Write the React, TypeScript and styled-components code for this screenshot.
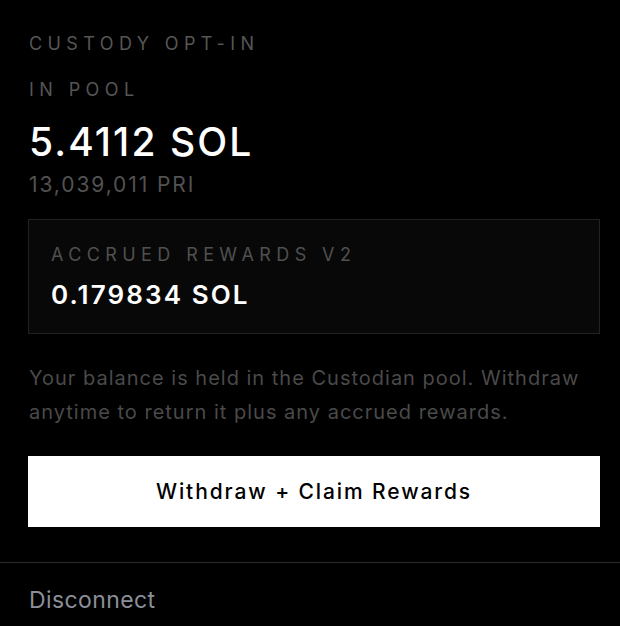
import styled, { createGlobalStyle } from 'styled-components';

const GlobalStyle = createGlobalStyle`
  html, body {
    margin: 0;
    background: #000;
  }
  body {
    font-family: Inter, 'Noto Sans', sans-serif;
    -webkit-font-smoothing: antialiased;
  }
`;

const Panel = styled.main`
  display: flex;
  flex-direction: column;
  min-height: 626px;
  background: #000;
  padding-top: 32px;
  box-sizing: border-box;
`;

const Section = styled.section`
  display: flex;
  flex-direction: column;
  padding: 0 20px 0 28px;
`;

const Label = styled.div<{ $gap?: number }>`
  font-size: 18px;
  line-height: 24px;
  letter-spacing: 0.3em;
  text-transform: uppercase;
  color: #565656;
  padding-left: 1px;
  margin-bottom: ${(p) => p.$gap ?? 0}px;
`;

const Amount = styled.div`
  margin-top: 18px;
  font-size: 39px;
  line-height: 44px;
  font-weight: 500;
  color: #fff;
  letter-spacing: 2.1px;
  padding-left: 1px;
`;

const SubAmount = styled.div`
  margin-top: 8px;
  font-size: 21px;
  line-height: 26px;
  color: #525252;
  letter-spacing: 1.9px;
  padding-left: 1px;
`;

const RewardsBox = styled.div`
  margin-top: 21px;
  border: 1px solid #222;
  background: #080808;
  padding: 24px 22px 21px;
  display: flex;
  flex-direction: column;
  gap: 12px;
`;

const BoxLabel = styled.div`
  font-size: 18px;
  line-height: 22px;
  letter-spacing: 0.3em;
  text-transform: uppercase;
  color: #505050;
`;

const BoxValue = styled.div`
  font-size: 26px;
  line-height: 34px;
  font-weight: 600;
  letter-spacing: 2.1px;
  color: #fff;
`;

const Note = styled.p`
  margin: 27px 0 0;
  padding-left: 1px;
  font-size: 20px;
  line-height: 34px;
  letter-spacing: 1px;
  color: #4a4a4a;
`;

const Button = styled.button`
  margin-top: 27px;
  height: 71px;
  border: none;
  background: #fff;
  color: #000;
  font-family: inherit;
  font-size: 21px;
  font-weight: 500;
  letter-spacing: 1.9px;
  cursor: pointer;
`;

const Divider = styled.hr`
  margin: 35px 0 0;
  border: none;
  border-top: 1px solid #2a2a2a;
`;

const Disconnect = styled.button`
  align-self: flex-start;
  margin: 22px 0 0 28px;
  padding: 0 0 0 1px;
  border: none;
  background: none;
  color: #8b8f98;
  font-family: inherit;
  font-size: 23px;
  line-height: 30px;
  letter-spacing: 0.4px;
  cursor: pointer;
`;

export default function App() {
  return (
    <Panel>
      <GlobalStyle />
      <Section>
        <Label $gap={22}>Custody opt-in</Label>
        <Label>In pool</Label>
        <Amount>5.4112 SOL</Amount>
        <SubAmount>13,039,011 PRI</SubAmount>
        <RewardsBox>
          <BoxLabel>Accrued rewards v2</BoxLabel>
          <BoxValue>0.179834 SOL</BoxValue>
        </RewardsBox>
        <Note>
          Your balance is held in the Custodian pool. Withdraw anytime to
          return it plus any accrued rewards.
        </Note>
        <Button>Withdraw + Claim Rewards</Button>
      </Section>
      <Divider />
      <Disconnect>Disconnect</Disconnect>
    </Panel>
  );
}
